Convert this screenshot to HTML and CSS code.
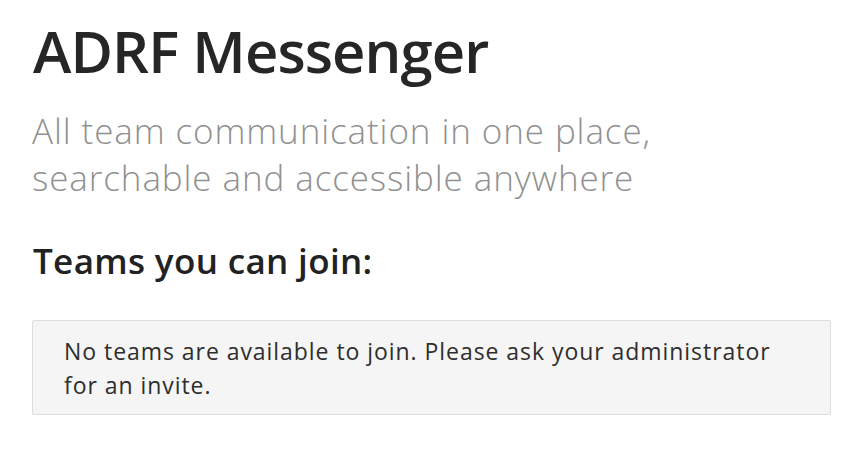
FILE: index.html
```html
<!DOCTYPE html>
<html lang="en">
<head>
<meta charset="utf-8">
<title>ADRF Messenger</title>
<link rel="stylesheet" href="styles.css">
</head>
<body>
<main class="signup">
  <h1 class="brand">ADRF Messenger</h1>
  <p class="tagline">All team communication in one place,<br>searchable and accessible anywhere</p>
  <h3 class="teams-title">Teams you can join:</h3>
  <div class="notice">No teams are available to join. Please ask your administrator<br>for an invite.</div>
</main>
</body>
</html>
```
FILE: styles.css
```css
html, body {
  margin: 0;
  padding: 0;
  background: #ffffff;
}
body {
  font-family: "Open Sans", "Noto Sans", sans-serif;
  color: #333333;
}
.signup {
  padding: 19px 35px 0 32px;
  display: flex;
  flex-direction: column;
}
.brand {
  margin: 0;
  font-size: 58px;
  line-height: 64px;
  font-weight: 600;
  letter-spacing: -0.9px;
  color: #262626;
  padding-left: 1px;
}
.tagline {
  margin: 25px 0 0 0;
  font-size: 35px;
  line-height: 46.5px;
  font-weight: 300;
  letter-spacing: 0.9px;
  color: #919191;
  padding-left: 0;
}
.teams-title {
  margin: 39px 0 0 0;
  font-size: 35px;
  line-height: 42px;
  font-weight: 600;
  letter-spacing: 0.35px;
  color: #222222;
  padding-left: 1px;
}
.notice {
  margin-top: 38px;
  background: #f5f5f5;
  border: 1px solid #dddddd;
  border-radius: 2px;
  box-shadow: 0 1px 1px rgba(0,0,0,0.05);
  padding: 13px 30px 12px 31px;
  font-size: 23px;
  line-height: 34px;
  letter-spacing: 0.95px;
  color: #2e2e2e;
}
```
